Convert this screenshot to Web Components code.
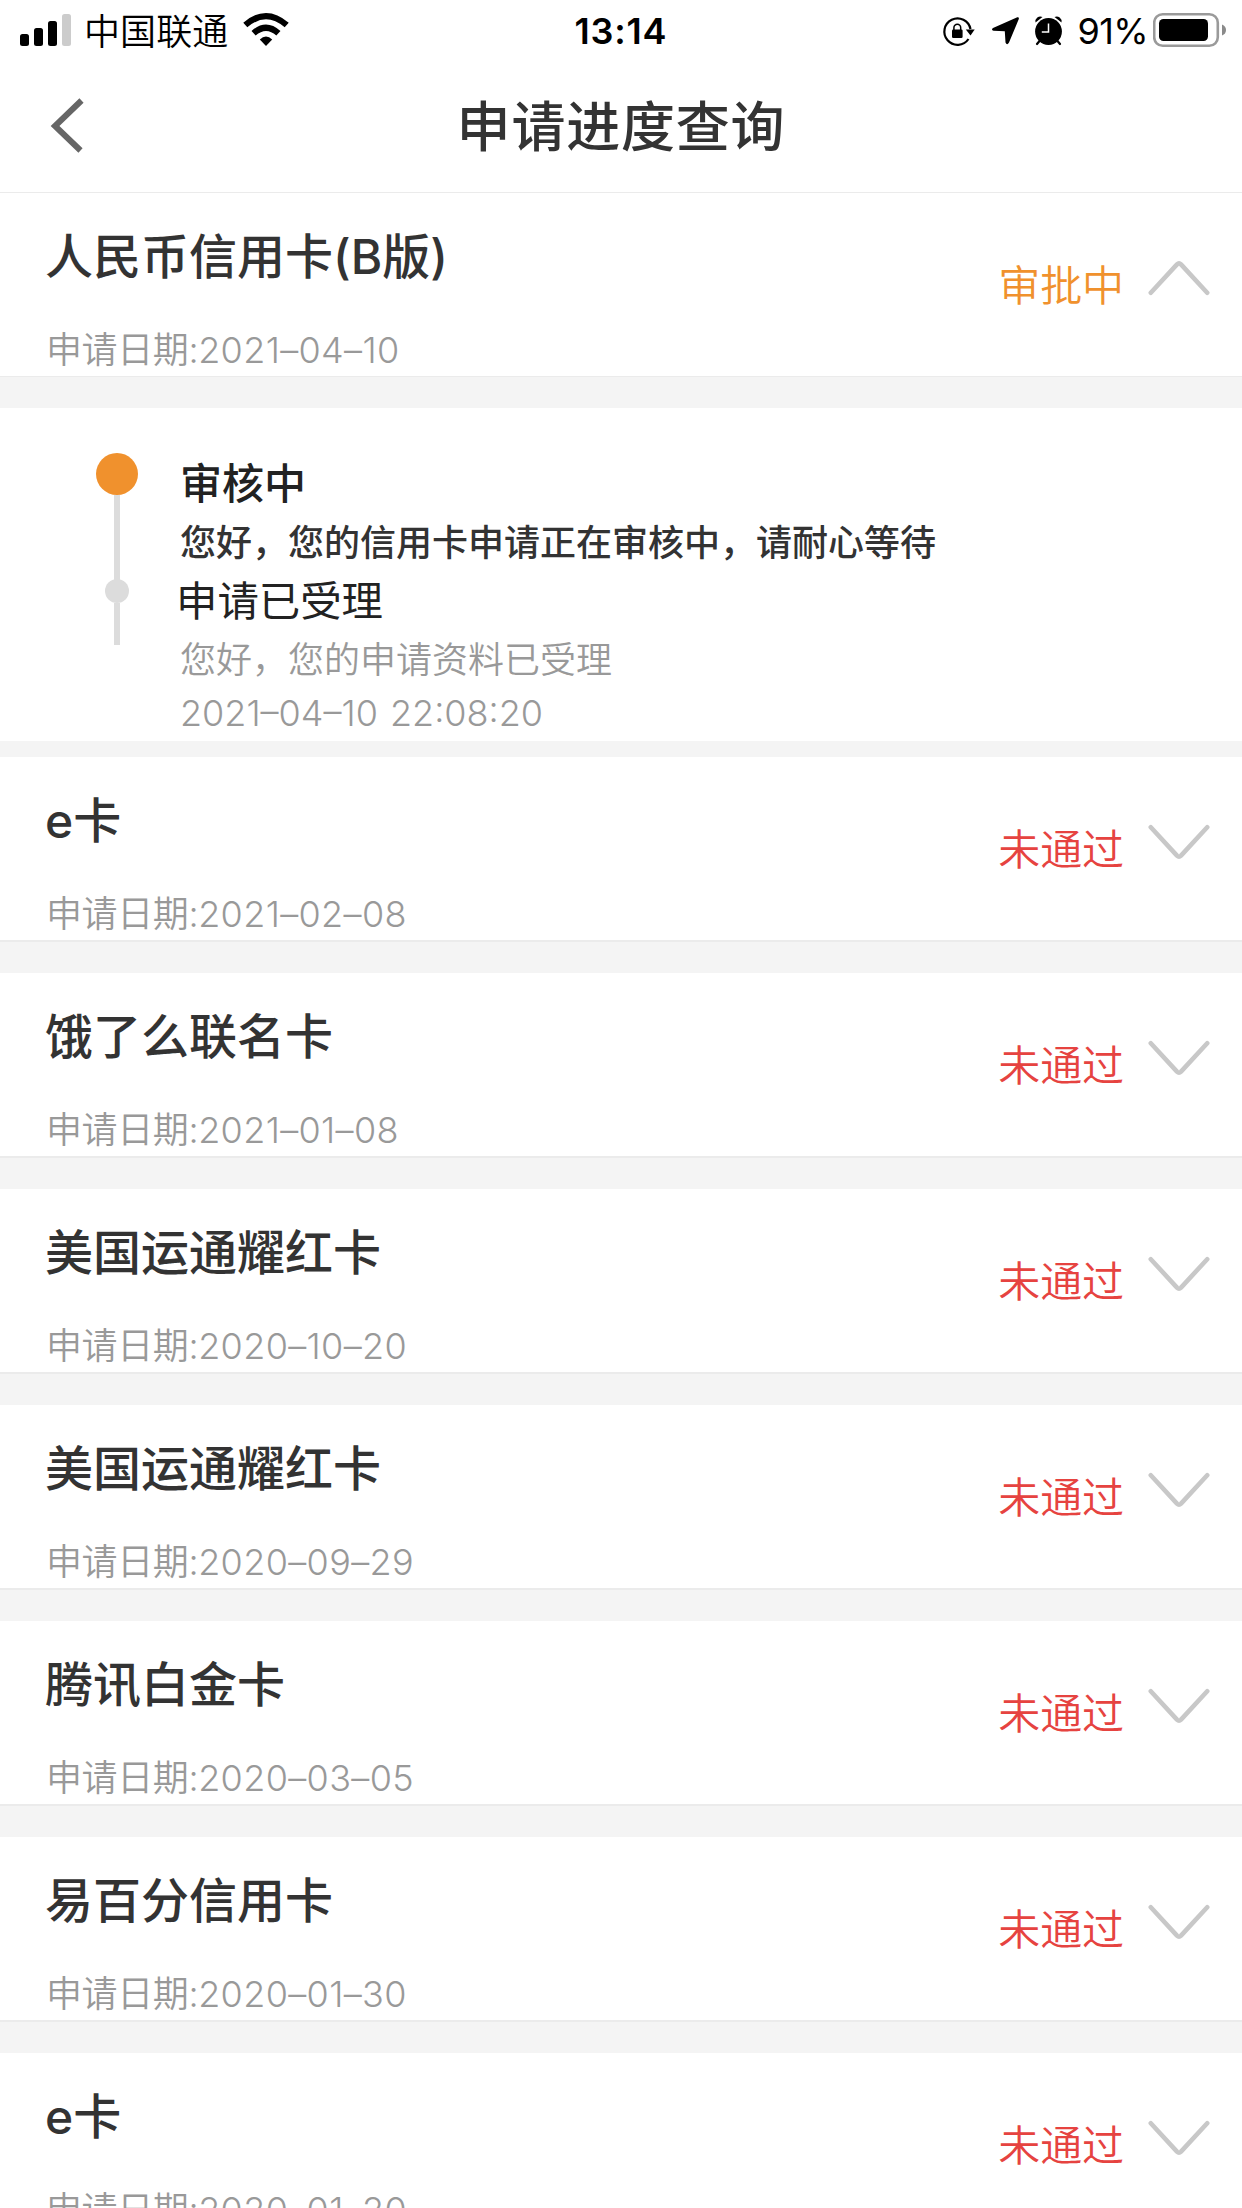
<!DOCTYPE html>
<html lang="zh-CN">
<head>
<meta charset="UTF-8">
<title>申请进度查询</title>
<style>
    :root {
        --color-text: #333;
        --color-muted: #999;
        --color-line: #ebebeb;
        --color-gap: #f4f4f4;
        --color-pending: #f0912d;
        --color-rejected: #e64340;
    }
    * { box-sizing: border-box; }
    body {
        margin: 0;
        width: 1242px;
        height: 2208px;
        overflow: hidden;
        background: #fff;
        color: var(--color-text);
        font-family: Inter, "Noto Sans CJK SC", sans-serif;
    }
</style>
</head>
<body>
<progress-page></progress-page>

<script>
const APPLICATIONS = [
    {
        name: '人民币信用卡(B版)', date: '2021–04–10', status: 'pending', open: true,
        steps: [
            { title: '审核中', detail: '您好，您的信用卡申请正在审核中，请耐心等待', active: true },
            { title: '申请已受理', detail: '您好，您的申请资料已受理', time: '2021–04–10 22:08:20' }
        ]
    },
    { name: 'e卡', date: '2021–02–08', status: 'rejected' },
    { name: '饿了么联名卡', date: '2021–01–08', status: 'rejected' },
    { name: '美国运通耀红卡', date: '2020–10–20', status: 'rejected' },
    { name: '美国运通耀红卡', date: '2020–09–29', status: 'rejected' },
    { name: '腾讯白金卡', date: '2020–03–05', status: 'rejected' },
    { name: '易百分信用卡', date: '2020–01–30', status: 'rejected' },
    { name: 'e卡', date: '2020–01–20', status: 'rejected' }
];

const STATUS_TEXT = { pending: '审批中', rejected: '未通过' };

// ==========================================================================
// Web Component: <status-bar>
// ==========================================================================
class StatusBar extends HTMLElement {
    constructor() {
        super();
        this.attachShadow({ mode: 'open' });
    }

    connectedCallback() {
        this.shadowRoot.innerHTML = `
            <style>
                :host {
                    display: grid;
                    grid-template-columns: 1fr auto 1fr;
                    height: 62px;
                    padding: 0 15px 0 20px;
                    color: #000;
                    font-size: 36px;
                    line-height: 62px;
                }
                div { display: flex; height: 62px; white-space: nowrap; }
                svg { display: block; flex: none; height: 62px; }
                .carrier { margin: 1px 15px 0 12px; height: 62px; letter-spacing: 0.1px; font-weight: 350; }
                .time { font-weight: 600; letter-spacing: 0.8px; margin-right: 5px; }
                .right { justify-content: flex-end; }
                .battery-text { margin: 0 5px 0 12px; letter-spacing: -0.6px; }
            </style>
            <div>
                <svg width="52" viewBox="0 0 52 62">
                    <rect x="0" y="34" width="9" height="12" rx="2.5"/>
                    <rect x="14" y="28" width="9" height="18" rx="2.5"/>
                    <rect x="28" y="21" width="9" height="25" rx="2.5"/>
                    <rect x="42" y="14" width="9" height="32" rx="2.5" fill="#ccc"/>
                </svg>
                <span class="carrier">中国联通</span>
                <svg width="46" viewBox="0 0 46 62">
                    <path d="M23 46 L16.8 39.5 Q23 33.5 29.2 39.5Z"/>
                    <g fill="none" stroke="#000" stroke-width="6.2">
                        <path d="M10.6 33.3 Q23 22.2 35.4 33.3"/>
                        <path d="M2.3 25 Q23 7.2 43.7 25"/>
                    </g>
                </svg>
            </div>
            <div class="time">13:14</div>
            <div class="right">
                <svg width="123" viewBox="942 0 123 62">
                    <path d="M968.5 39 A13.2 13.2 0 1 1 970.5 29" fill="none" stroke="#000" stroke-width="2.2"/>
                    <path d="M965.8 29.5 L974.7 29.5 L970.5 35.5Z"/>
                    <rect x="952" y="29.5" width="10.6" height="8.5" rx="1.2"/>
                    <path d="M953.9 30.5 v-2.8 a3.4 3.4 0 0 1 6.8 0 v2.8" fill="none" stroke="#000" stroke-width="1.5"/>
                    <path d="M1017.3 17.2 Q1019.3 16.8 1018.8 19 L1009 42.5 Q1007 46 1005.5 42.5 L1004.8 31.3 L993.5 30.7 Q990.8 29.7 993 28Z"/>
                    <g transform="translate(-17 0)">
                        <circle cx="1065.5" cy="31.5" r="13.4"/>
                        <path d="M1052.5 22.5 A5 5 0 0 1 1059.5 17Z M1071.5 17 A5 5 0 0 1 1078.5 22.5Z"/>
                        <path d="M1056.5 41 L1054 44 M1074.5 41 L1077 44" stroke="#000" stroke-width="2.2" stroke-linecap="round"/>
                        <path d="M1065.5 23.5 V32 H1058.8" fill="none" stroke="#fff" stroke-width="1.5"/>
                    </g>
                </svg>
                <span class="battery-text">91%</span>
                <svg width="74" viewBox="0 0 74 62">
                    <rect x="1.2" y="14.2" width="63.6" height="31.6" rx="8.5" fill="none" stroke="#9a9a9a" stroke-width="2.6"/>
                    <rect x="6" y="19" width="49" height="22" rx="4.5"/>
                    <path d="M69 24.5 Q73 26 73 30 Q73 34 69 35.5Z" fill="#8a8a8a"/>
                </svg>
            </div>
        `;
    }
}
customElements.define('status-bar', StatusBar);

// ==========================================================================
// Web Component: <nav-header>
// ==========================================================================
class NavHeader extends HTMLElement {
    constructor() {
        super();
        this.attachShadow({ mode: 'open' });
    }

    connectedCallback() {
        this.shadowRoot.innerHTML = `
            <style>
                :host {
                    display: grid;
                    grid-template-columns: 1fr auto 1fr;
                    align-items: center;
                    height: 131px;
                    box-sizing: border-box;
                    padding: 0 50px 2px;
                    border-bottom: 1px solid var(--color-line);
                }
                svg { display: block; }
                h1 {
                    margin: 4px 0 0;
                    height: 80px;
                    line-height: 80px;
                    font-size: 54px;
                    font-weight: 500;
                    letter-spacing: 0.8px;
                }
            </style>
            <svg width="36" height="56" viewBox="0 0 36 56" fill="none" stroke="#666" stroke-width="6">
                <path d="M31.5 2.5 L5 28 L30.5 52.5"/>
            </svg>
            <h1><slot></slot></h1>
        `;
    }
}
customElements.define('nav-header', NavHeader);

// ==========================================================================
// Web Component: <progress-step>
// ==========================================================================
class ProgressStep extends HTMLElement {
    constructor() {
        super();
        this.attachShadow({ mode: 'open' });
    }

    connectedCallback() {
        this.shadowRoot.innerHTML = `
            <style>
                :host { display: grid; grid-template-columns: 42px 1fr; column-gap: 42px; height: 117px; }
                .rail { display: flex; flex-direction: column; align-items: center; height: 66px; margin-top: 9px; }
                .dot { flex: none; width: 24px; height: 24px; border-radius: 50%; background: #dcdcdc; }
                .line { flex: 1; width: 6px; background: #dcdcdc; }
                .text { display: flex; flex-direction: column; font-size: 36px; color: var(--color-muted); }
                .title { height: 62px; line-height: 62px; font-size: 41.4px; color: #222; margin-left: -4px; }
                .detail, .time { height: 55px; line-height: 55px; font-weight: 350; }
                .detail { margin-top: 1px; }
                .time { letter-spacing: 0; word-spacing: 2px; margin-top: -2px; font-weight: 300; }
                /* the first rail runs on past its row, down to the next dot */
                :host([active]) .rail { height: 128px; margin-top: 0; }
                :host([active]) .dot { width: 42px; height: 42px; background: var(--color-pending); }
                :host([active]) .title { font-size: 42px; font-weight: 500; margin-left: 0; }
                :host([active]) .detail { font-weight: 500; color: var(--color-text); }
            </style>
            <div class="rail">
                <div class="dot"></div>
                <div class="line"></div>
            </div>
            <div class="text">
                <div class="title"><slot name="title"></slot></div>
                <div class="detail"><slot name="detail"></slot></div>
                <div class="time"><slot name="time"></slot></div>
            </div>
        `;
    }
}
customElements.define('progress-step', ProgressStep);

// ==========================================================================
// Web Component: <application-card>
// ==========================================================================
class ApplicationCard extends HTMLElement {
    constructor() {
        super();
        this.attachShadow({ mode: 'open' });
    }

    connectedCallback() {
        this.shadowRoot.innerHTML = `
            <style>
                :host { display: block; }
                .row {
                    display: flex;
                    justify-content: space-between;
                    height: 183px;
                    padding: 0 32px 0 45px;
                }
                .info { display: flex; flex-direction: column; }
                .name {
                    height: 72px;
                    margin-top: 28px;
                    line-height: 72px;
                    font-size: 48px;
                    font-weight: 500;
                }
                .date {
                    height: 54px;
                    margin: 30px 0 0 1px;
                    line-height: 54px;
                    font-size: 36px;
                    font-weight: 300;
                    letter-spacing: 0.35px;
                    color: var(--color-muted);
                }
                .status { display: flex; gap: 24px; color: var(--color-rejected); }
                .status span {
                    height: 60px;
                    margin-top: 63px;
                    line-height: 60px;
                    font-size: 42px;
                    font-weight: 350;
                    letter-spacing: -0.1px;
                }
                .status svg { display: block; margin-top: 67px; }
                :host([status="pending"]) .status { color: var(--color-pending); }
                :host([open]) svg { transform: rotate(180deg); }
                .gap { height: 33px; border-top: 2px solid var(--color-line); background: var(--color-gap); box-sizing: border-box; }
                :host([open]) .gap { height: 32px; border-top-width: 1px; }
                .steps { display: none; }
                :host([open]) .steps {
                    display: block;
                    height: 349px;
                    box-sizing: border-box;
                    padding: 45px 45px 0 96px;
                    border-bottom: 16px solid var(--color-gap);
                }
            </style>
            <div class="row">
                <div class="info">
                    <div class="name"><slot name="name"></slot></div>
                    <div class="date"><slot name="date"></slot></div>
                </div>
                <div class="status">
                    <span>${STATUS_TEXT[this.getAttribute('status')]}</span>
                    <svg width="62" height="36" viewBox="0 0 62 36" fill="none" stroke="#c8c8c8" stroke-width="4.6" stroke-linecap="round" stroke-linejoin="round">
                        <path d="M2.8 3.2 L29 31.6 Q31 33.6 33 31.6 L59.2 3.2"/>
                    </svg>
                </div>
            </div>
            <div class="gap"></div>
            <div class="steps"><slot></slot></div>
        `;
    }
}
customElements.define('application-card', ApplicationCard);

// ==========================================================================
// Web Component: <progress-page>
// ==========================================================================
class ProgressPage extends HTMLElement {
    constructor() {
        super();
        this.attachShadow({ mode: 'open' });
    }

    connectedCallback() {
        this.shadowRoot.innerHTML = `
            <style>
                :host { display: flex; flex-direction: column; }
                .label { font-weight: 350; letter-spacing: -0.4px; }
            </style>
            <status-bar></status-bar>
            <nav-header>申请进度查询</nav-header>
            ${APPLICATIONS.map(app => `
                <application-card status="${app.status}" ${app.open ? 'open' : ''}>
                    <span slot="name">${app.name}</span>
                    <span slot="date"><span class="label">申请日期:</span>${app.date}</span>
                    ${(app.steps || []).map(step => `
                        <progress-step ${step.active ? 'active' : ''}>
                            <span slot="title">${step.title}</span>
                            <span slot="detail">${step.detail}</span>
                            ${step.time ? `<span slot="time">${step.time}</span>` : ''}
                        </progress-step>
                    `).join('')}
                </application-card>
            `).join('')}
        `;
    }
}
customElements.define('progress-page', ProgressPage);
</script>
</body>
</html>
